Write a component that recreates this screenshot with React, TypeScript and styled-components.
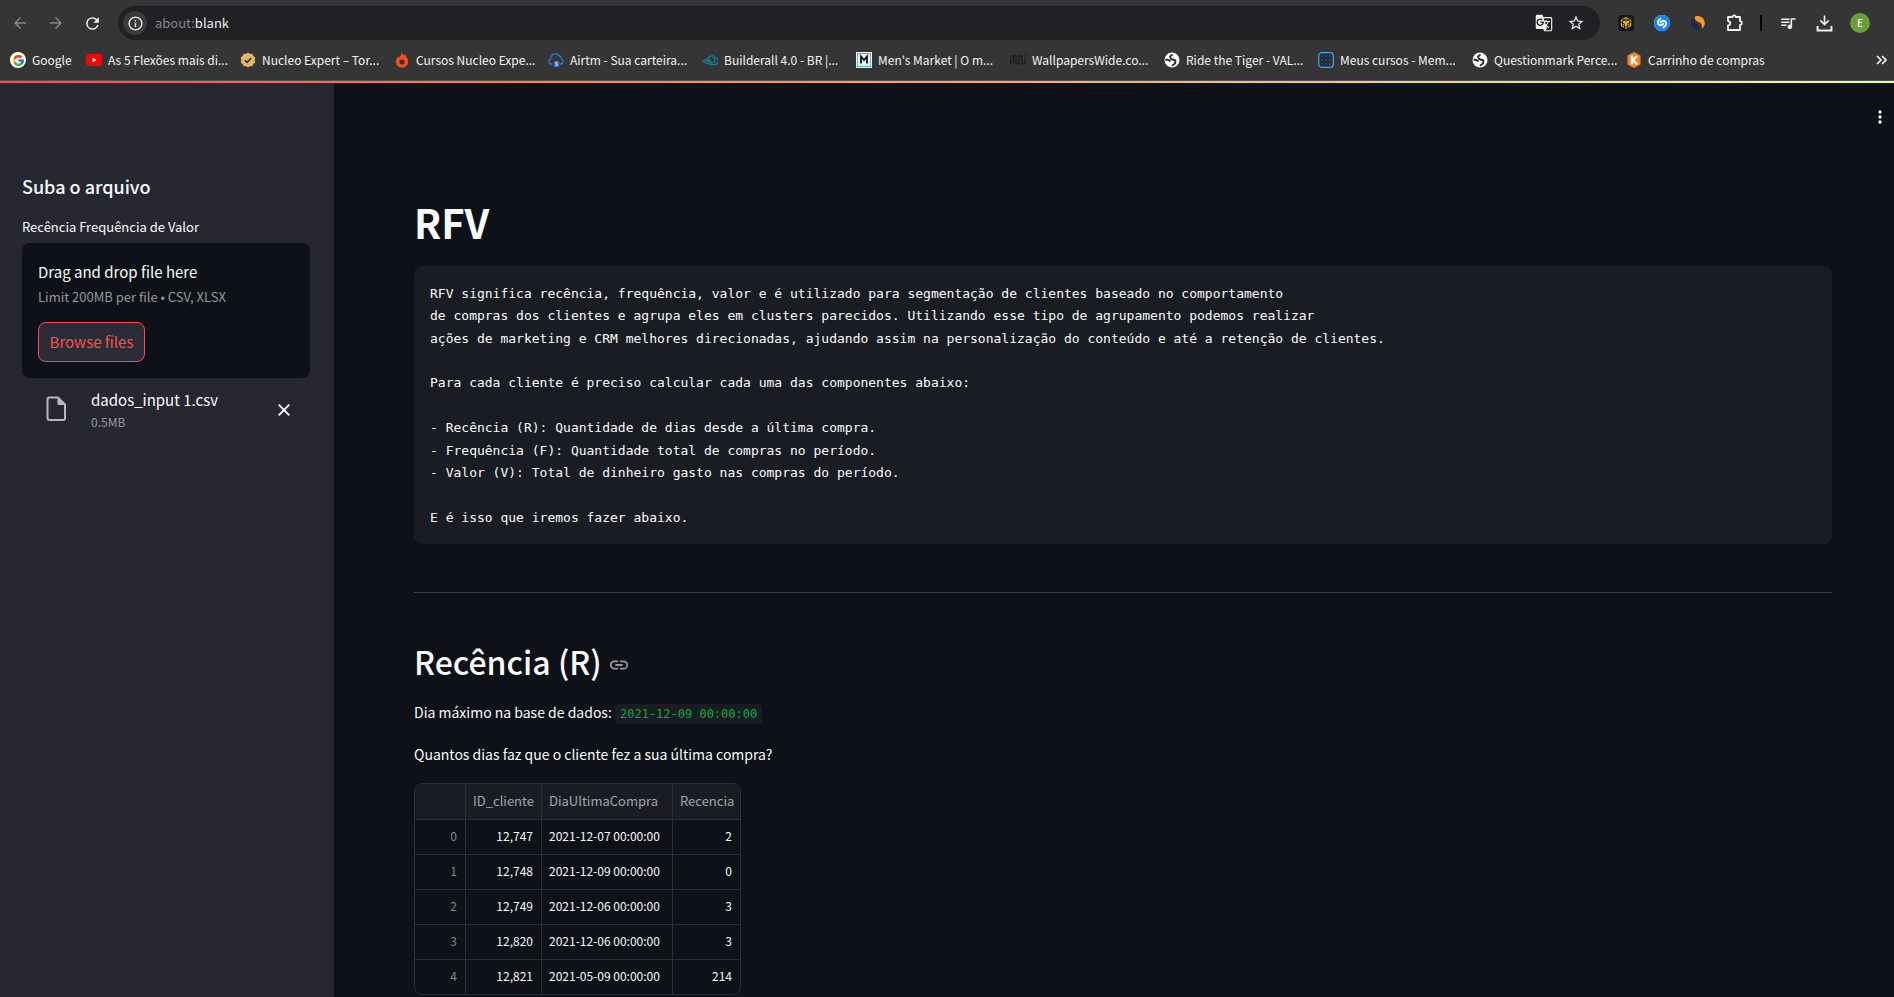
import React from "react";
import styled, { createGlobalStyle, css } from "styled-components";
import { FcGoogle } from "react-icons/fc";
import { SiShazam, SiBnbchain } from "react-icons/si";

const sans = '"Noto Sans CJK JP", "Noto Sans", sans-serif';
const mono = '"DejaVu Sans Mono", "Liberation Mono", monospace';

const GlobalStyle = createGlobalStyle`
  *, *::before, *::after { box-sizing: border-box; }
  body { margin: 0; background: #0e1117; color: #fafafa; font-family: ${sans}; }
  button, input, select { font: inherit; color: inherit; }
  h1, h2, p, pre { margin: 0; }
`;

const Shell = styled.div`
  display: flex;
  flex-direction: column;
  height: 100vh;
  overflow: hidden;
`;

const Chrome = styled.header`
  flex: none;
  background: #353535;
  border-bottom: 1px solid #4a5153;
  font-size: 12px;
`;

const Toolbar = styled.div`
  display: flex;
  align-items: center;
  height: 46px;
  padding: 0 16px 0 8px;
`;

const IconButton = styled.button<{ $size?: number; $dim?: boolean }>`
  display: grid;
  place-items: center;
  flex: none;
  width: ${(p) => p.$size ?? 36}px;
  height: 34px;
  padding: 0;
  border: 0;
  background: none;
  color: ${(p) => (p.$dim ? "#858585" : "#f1f1f1")};
`;

const AddressBar = styled.div`
  display: flex;
  align-items: center;
  flex: 1;
  height: 34px;
  margin: 0 8px 0 14px;
  padding: 0 8px 0 5px;
  border-radius: 17px;
  background: #202124;
`;

const SiteInfo = styled.button`
  display: grid;
  place-items: center;
  width: 24px;
  height: 24px;
  padding: 0;
  border: 0;
  border-radius: 50%;
  background: #3a3a3b;
  color: #e8e8e8;
`;

const Url = styled.span`
  flex: 1;
  margin-left: 8px;
  font-size: 13px;
  line-height: 20px;
  color: #ededed;
`;

const Scheme = styled.span`
  color: #85868a;
`;

const Separator = styled.span`
  width: 2px;
  height: 16px;
  margin: 0 8px;
  background: #050505;
`;

const Avatar = styled.span`
  display: grid;
  place-items: center;
  width: 20px;
  height: 20px;
  border-radius: 50%;
  background: #689f38;
  color: #fff;
  font-size: 10px;
  line-height: 20px;
  font-weight: 500;
`;

const Bookmarks = styled.nav`
  display: flex;
  align-items: center;
  height: 34px;
  padding: 0 7px 6px 10px;
`;

const Bookmark = styled.a<{ $auto?: boolean }>`
  display: flex;
  align-items: center;
  gap: 6px;
  flex: none;
  width: ${(p) => (p.$auto ? "76px" : "154px")};
  color: #f3f3f3;
  line-height: 16px;
  text-decoration: none;
  white-space: nowrap;

  svg { flex: none; }
`;

const More = styled.button`
  display: grid;
  place-items: center;
  margin-left: auto;
  padding: 0;
  border: 0;
  background: none;
  color: #f1f1f1;
`;

const Decoration = styled.div`
  flex: none;
  height: 2px;
  background: linear-gradient(90deg, #ff4b4b, #fffd80);
`;

const Page = styled.div`
  display: flex;
  flex: 1;
  min-height: 0;
`;

const Sidebar = styled.aside`
  flex: none;
  width: 334px;
  padding: 89px 24px 0 22px;
  background: #262730;
`;

const SidebarTitle = styled.h2`
  font-size: 18px;
  line-height: 28px;
  font-weight: 500;
`;

const UploadLabel = styled.label`
  display: block;
  margin-top: 15px;
  margin-bottom: 4px;
  font-size: 13px;
  line-height: 24px;
`;

const Dropzone = styled.section`
  height: 135px;
  padding: 16px;
  border-radius: 8px;
  background: #0e1117;
`;

const DropTitle = styled.p`
  font-size: 15px;
  line-height: 26px;
`;

const Hint = styled.small`
  display: block;
  font-size: 13px;
  line-height: 24px;
  color: #96979b;
`;

const BrowseButton = styled.button`
  width: 107px;
  height: 40px;
  margin-top: 13px;
  padding: 0;
  border: 1px solid #ff4b4b;
  border-radius: 8px;
  background: #2b2c36;
  color: #ff4b4b;
  font-size: 15px;
  line-height: 36px;
`;

const HiddenInput = styled.input`
  display: none;
`;

const FileRow = styled.div`
  display: flex;
  align-items: center;
  padding: 10px 16px 0 20px;
`;

const FileText = styled.div`
  flex: 1;
  margin-left: 21px;
`;

const FileName = styled.p`
  font-size: 15px;
  line-height: 24px;
`;

const FileSize = styled(Hint)`
  line-height: 20px;
  font-size: 12px;
`;

const RemoveButton = styled.button`
  display: grid;
  place-items: center;
  width: 20px;
  height: 20px;
  padding: 0;
  border: 0;
  background: none;
`;

const Main = styled.main`
  position: relative;
  flex: 1;
  min-width: 0;
  padding: 107px 62px 0 80px;
`;

const MenuButton = styled.button`
  position: absolute;
  top: 22px;
  right: 2px;
  display: grid;
  place-items: center;
  width: 24px;
  height: 24px;
  padding: 0;
  border: 0;
  background: none;
`;

const Title = styled.h1`
  font-size: 40px;
  line-height: 64px;
  font-weight: 700;
`;

const CodeBlock = styled.pre`
  margin-top: 12px;
  padding: 17px 16px 15px;
  border-radius: 8px;
  background: #1a1c24;
  font-family: ${mono};
  font-size: 13px;
  line-height: 1.72;
`;

const Rule = styled.hr`
  height: 1px;
  margin: 48px 0 38px;
  border: 0;
  background: #3b3d45;
`;

const SectionTitle = styled.h2`
  display: flex;
  align-items: center;
  gap: 6px;
  font-size: 32px;
  line-height: 60px;
  font-weight: 500;

  a { display: grid; padding-top: 8px; color: #97989c; }
`;

const Paragraph = styled.p<{ $gap?: number }>`
  margin-top: ${(p) => p.$gap ?? 16}px;
  font-size: 14px;
  line-height: 26px;
`;

const InlineCode = styled.code`
  padding: 3px 5px;
  border-radius: 4px;
  background: #1a1c24;
  color: #09ab3b;
  font-family: ${mono};
  font-size: 12px;
  line-height: 16px;
`;

const DataTable = styled.table`
  margin-top: 16px;
  border: 1px solid #2c2e36;
  border-radius: 8px;
  border-spacing: 0;
  overflow: hidden;
  table-layout: fixed;
  width: 327px;
  font-size: 12px;
  line-height: 18px;
`;

const cell = css`
  height: 35px;
  padding: 0 8px 2px 7px;
  border-left: 1px solid #2c2e36;
  border-top: 1px solid #2c2e36;
  font-weight: 400;
  white-space: nowrap;

  &:first-child { border-left: 0; }
`;

const HeadCell = styled.th<{ $width: number; $right?: boolean }>`
  ${cell}
  width: ${(p) => p.$width}px;
  padding-bottom: 0;
  border-top: 0;
  background: #1a1c24;
  color: #a3a4aa;
  font-size: 13px;
  text-align: ${(p) => (p.$right ? "right" : "left")};
`;

const IndexCell = styled.th`
  ${cell}
  color: #85868b;
  text-align: right;
`;

const Cell = styled.td<{ $left?: boolean }>`
  ${cell}
  text-align: ${(p) => (p.$left ? "left" : "right")};
`;

const Icon16 = ({ children }: { children: React.ReactNode }) => (
  <svg width="16" height="16" viewBox="0 0 16 16" fill="none" aria-hidden="true">{children}</svg>
);

const Material = ({ d, size = 20 }: { d: string; size?: number }) => (
  <svg width={size} height={size} viewBox="0 0 24 24" fill="currentColor" aria-hidden="true"><path d={d} /></svg>
);

const Badge = styled.span<{ $bg: string; $radius: string }>`
  display: grid;
  place-items: center;
  flex: none;
  width: 16px;
  height: 16px;
  border-radius: ${(p) => p.$radius};
  background: ${(p) => p.$bg};
`;

const GoogleIcon = () => (
  <Badge $bg="#fff" $radius="50%"><FcGoogle size={13} /></Badge>
);

const YoutubeIcon = () => (
  <Icon16>
    <rect y="2" width="16" height="12" rx="3" fill="#f00" />
    <path d="M6.500 5.600v4.800L10.600 8z" fill="#fff" />
  </Icon16>
);

const SealIcon = () => (
  <Icon16>
    <path d="M8 .5l2 1.400 2.400-.2.9 2.300 2 1.400L14.700 8l.6 2.500-2 1.400-.9 2.400-2.400-.2L8 15.500l-2-1.400-2.400.2-.9-2.400-2-1.400L1.300 8 .7 5.400l2-1.400.9-2.300 2.400.2z" fill="#e8b765" />
    <path d="M4.800 8.200l2.300 2.200 4-4.300" stroke="#2e2618" strokeWidth="1.500" />
  </Icon16>
);

const FlameIcon = () => (
  <Icon16>
    <path d="M7.800 0c.6 2 1.400 2.600 2 3.200l.5-1c2 2 3.900 4.600 3.900 7.400a6.100 6.100 0 0 1-12.300 0c0-2 .9-3.900 2.400-5.200l.6 1.400C6.600 4.200 7.600 2.500 7.800 0z" fill="#f04e23" />
    <circle cx="8" cy="10" r="2.500" fill="#35302e" />
  </Icon16>
);

const CloudIcon = () => (
  <Icon16>
    <path d="M4.500 12H3.300a2.700 2.700 0 0 1-.4-5.300 4.300 4.300 0 0 1 4-4.900c1.500-.2 3 .5 3.800 1.700a3.700 3.700 0 0 1 2.700 3.300A2.700 2.700 0 0 1 12.900 12h-1.400" stroke="#1a7fe0" strokeWidth="1.300" />
    <rect x="6" y="9" width="5" height="6" fill="#1a82f0" />
    <path d="M9.500 10.500H7.800V12h1.500v1.300H7.500" stroke="#cfe6ff" strokeWidth=".8" />
  </Icon16>
);

const WaveCloudIcon = () => (
  <Icon16>
    <path d="M6 6.500a4.700 4.700 0 0 1 8.300-.5 3.500 3.500 0 0 1-1.800 6.600H8M10.500 5.500a2.800 2.800 0 0 1 1.200 5H8.500" stroke="#1b7f9e" strokeWidth="1.200" />
    <path d="M0 9.500l6-3 4 5M1.500 11l4.500-2.500 2.500 3.500M3.500 12l2-1 1.500 1.500" stroke="#1b7f9e" strokeWidth="1.200" />
  </Icon16>
);

const MarketIcon = () => (
  <Icon16>
    <rect width="16" height="16" fill="#fff" />
    <rect x="1.500" y="1.500" width="13" height="13" fill="#e8f6fa" stroke="#56b4cf" />
    <path d="M5 11.500v-7l3 3.500 3-3.500v7" stroke="#111" strokeWidth="1.800" />
  </Icon16>
);

const WideIcon = () => (
  <Icon16>
    <path d="M.8 6v5.500M.8 3v1.500M3.500 11.500V4H6v7.500h3V4h3v7.500h3V6.500M15 3v1.500M3.500 4H2" stroke="#1b1b1b" strokeWidth="1.400" />
  </Icon16>
);

const GlobeIcon = () => (
  <Icon16>
    <circle cx="8" cy="8" r="7.500" fill="#fff" />
    <path d="M8.500 2.500L6 4.500 7 7l4.500 1.500-.5 3-3 2.200M1.500 7.500l3 .5 2 1.500" stroke="#303030" strokeWidth="1.900" strokeLinejoin="round" />
  </Icon16>
);

const GridIcon = () => (
  <Icon16>
    <rect x=".7" y=".7" width="14.600" height="14.600" rx="3" fill="#272c31" stroke="#35aee2" strokeWidth="1.200" />
    <g fill="#263f85">
      {[3, 7, 11].map((y) => [3, 7, 11].map((x) => <rect key={`${x}-${y}`} x={x} y={y} width="2" height="2" />))}
    </g>
  </Icon16>
);

const KIcon = () => (
  <Icon16>
    <path d="M8 0l6.500 3.500v9L8 16l-6.500-3.500v-9z" fill="#f58220" />
    <path d="M5.800 3.500v9M11 4L7 8l4.200 4.500" stroke="#fff" strokeWidth="2.200" />
  </Icon16>
);

const bookmarks = [
  { label: "Google", icon: <GoogleIcon />, auto: true },
  { label: "As 5 Flexões mais di...", icon: <YoutubeIcon /> },
  { label: "Nucleo Expert – Tor...", icon: <SealIcon /> },
  { label: "Cursos Nucleo Expe...", icon: <FlameIcon /> },
  { label: "Airtm - Sua carteira...", icon: <CloudIcon /> },
  { label: "Builderall 4.0 - BR |...", icon: <WaveCloudIcon /> },
  { label: "Men's Market | O m...", icon: <MarketIcon /> },
  { label: "WallpapersWide.co...", icon: <WideIcon /> },
  { label: "Ride the Tiger - VAL...", icon: <GlobeIcon /> },
  { label: "Meus cursos - Mem...", icon: <GridIcon /> },
  { label: "Questionmark Perce...", icon: <GlobeIcon /> },
  { label: "Carrinho de compras", icon: <KIcon /> },
];

const rows = [
  { index: 0, id: "12,747", lastPurchase: "2021-12-07 00:00:00", recency: 2 },
  { index: 1, id: "12,748", lastPurchase: "2021-12-09 00:00:00", recency: 0 },
  { index: 2, id: "12,749", lastPurchase: "2021-12-06 00:00:00", recency: 3 },
  { index: 3, id: "12,820", lastPurchase: "2021-12-06 00:00:00", recency: 3 },
  { index: 4, id: "12,821", lastPurchase: "2021-05-09 00:00:00", recency: 214 },
];

const description = `RFV significa recência, frequência, valor e é utilizado para segmentação de clientes baseado no comportamento
de compras dos clientes e agrupa eles em clusters parecidos. Utilizando esse tipo de agrupamento podemos realizar
ações de marketing e CRM melhores direcionadas, ajudando assim na personalização do conteúdo e até a retenção de clientes.

Para cada cliente é preciso calcular cada uma das componentes abaixo:

- Recência (R): Quantidade de dias desde a última compra.
- Frequência (F): Quantidade total de compras no período.
- Valor (V): Total de dinheiro gasto nas compras do período.

E é isso que iremos fazer abaixo.`;

const paths = {
  back: "M20 11H7.830l5.590-5.590L12 4l-8 8 8 8 1.410-1.410L7.830 13H20v-2z",
  forward: "M12 4l-1.410 1.410L16.170 11H4v2h12.170l-5.580 5.590L12 20l8-8z",
  reload: "M17.650 6.350A7.958 7.958 0 0 0 12 4a8 8 0 1 0 7.730 10h-2.080A6 6 0 1 1 12 6c1.660 0 3.140.69 4.220 1.780L13 11h7V4l-2.350 2.350z",
  info: "M11 7h2v2h-2zm0 4h2v6h-2zm1-9a10 10 0 1 0 0 20 10 10 0 0 0 0-20zm0 18a8 8 0 1 1 0-16 8 8 0 0 1 0 16z",
  translate: "M21 4H11l-1-3H3c-1.100 0-2 .9-2 2v15c0 1.100.9 2 2 2h8l1 3h9c1.100 0 2-.9 2-2V6c0-1.100-.9-2-2-2zM7 16c-2.760 0-5-2.240-5-5s2.240-5 5-5c1.350 0 2.480.5 3.350 1.300L9.030 8.570c-.38-.36-1.040-.78-2.030-.78-1.740 0-3.150 1.440-3.150 3.210S5.260 14.210 7 14.210c2.010 0 2.840-1.440 2.920-2.410H7v-1.710h4.680c.07.31.12.61.12 1.020C11.800 13.970 9.890 16 7 16zm6.170-5.420h3.700c-.43 1.250-1.110 2.430-2.050 3.470-.31-.35-.6-.72-.86-1.100l-.79-2.370zm8.330 9.920c0 .55-.45 1-1 1H14l2-2.500-1.040-3.100 3.100 3.100.92-.92-3.300-3.250.02-.02c1.130-1.250 1.930-2.690 2.400-4.220H20v-1.300h-4.530V8h-1.290v1.290h-1.440L11.460 5.500h9.040c.55 0 1 .45 1 1v14z",
  star: "M22 9.240l-7.190-.62L12 2 9.190 8.630 2 9.240l5.460 4.730L5.820 21 12 17.270 18.180 21l-1.630-7.030L22 9.240zM12 15.400l-3.760 2.270 1-4.280-3.320-2.880 4.380-.38L12 6.100l1.710 4.040 4.380.38-3.320 2.880 1 4.280L12 15.400z",
  queue: "M3 10h11v2H3zm0-4h11v2H3zm0 8h7v2H3zM15.500 5.500V14.200A3 3 0 1 0 17.500 17V7.500H22v-2z",
  download: "M11 2h2v9l3.600-3.600L18 8.800l-6 6-6-6 1.400-1.400L11 11zM2 15h2.500v4.500h15V15H22v7H2z",
  more: "M12 8a2 2 0 1 0 0-4 2 2 0 0 0 0 4zm0 2a2 2 0 1 0 0 4 2 2 0 0 0 0-4zm0 6a2 2 0 1 0 0 4 2 2 0 0 0 0-4z",
  link: "M3.900 12c0-1.710 1.390-3.100 3.100-3.100h4V7H7a5 5 0 0 0 0 10h4v-1.900H7c-1.710 0-3.100-1.390-3.100-3.100zM8 13h8v-2H8v2zm9-6h-4v1.900h4a3.100 3.100 0 0 1 0 6.200h-4V17h4a5 5 0 0 0 0-10z",
};

export default function App() {
  return (
    <Shell>
      <GlobalStyle />
      <Chrome>
        <Toolbar>
          <IconButton $dim $size={24} aria-label="Voltar"><Material d={paths.back} size={18} /></IconButton>
          <IconButton $dim $size={48} aria-label="Avançar"><Material d={paths.forward} size={18} /></IconButton>
          <IconButton $size={24} aria-label="Recarregar"><Material d={paths.reload} size={19} /></IconButton>
          <AddressBar>
            <SiteInfo aria-label="Informações do site"><Material d={paths.info} size={17} /></SiteInfo>
            <Url><Scheme>about:</Scheme>blank</Url>
            <IconButton $size={32} aria-label="Traduzir"><Material d={paths.translate} size={18} /></IconButton>
            <IconButton $size={32} aria-label="Favoritar"><Material d={paths.star} size={18} /></IconButton>
          </AddressBar>
          <IconButton aria-label="Carteira">
            <Badge $bg="#14181f" $radius="3px"><SiBnbchain size={12} color="#f0b90b" /></Badge>
          </IconButton>
          <IconButton aria-label="Shazam">
            <Badge $bg="#fff" $radius="50%"><SiShazam size={16} color="#0a84ff" /></Badge>
          </IconButton>
          <IconButton aria-label="Similarweb">
            <Icon16>
              <path d="M3 2.500C.5 5.500.7 10.200 3.300 12.700c2 2 5.200 2.300 7.200 1.300C9 10.500 4 8.500 3 2.500z" fill="#1b2653" />
              <path d="M5 1.500c4-1.500 9 1 9.700 5.500.4 3-1 5.500-2.700 6.700.6-5-1.500-6-4.500-7.200C5.200 5.500 4.500 3.500 5 1.500z" fill="#ff9a1f" />
            </Icon16>
          </IconButton>
          <IconButton aria-label="Extensões">
            <svg width="18" height="18" viewBox="0 0 18 18" fill="none" stroke="currentColor" strokeWidth="1.800" aria-hidden="true">
              <path d="M3 3h4.500a1.600 1.600 0 0 1 3.200 0H15v4.200a1.800 1.800 0 0 1 0 3.600V16H3v-4.500c3-.5 3-4 0-4.500z" strokeLinejoin="round" />
            </svg>
          </IconButton>
          <Separator />
          <IconButton aria-label="Mídia"><Material d={paths.queue} size={18} /></IconButton>
          <IconButton aria-label="Downloads"><Material d={paths.download} size={19} /></IconButton>
          <IconButton aria-label="Perfil"><Avatar>E</Avatar></IconButton>
        </Toolbar>
        <Bookmarks aria-label="Favoritos">
          {bookmarks.map((b) => (
            <Bookmark key={b.label} href="#" $auto={b.auto}>{b.icon}{b.label}</Bookmark>
          ))}
          <More aria-label="Mais favoritos">
            <svg width="11" height="10" viewBox="0 0 11 10" fill="none" stroke="currentColor" strokeWidth="1.700" aria-hidden="true">
              <path d="M1 1l4 4-4 4M6 1l4 4-4 4" />
            </svg>
          </More>
        </Bookmarks>
      </Chrome>
      <Decoration />
      <Page>
        <Sidebar>
          <SidebarTitle>Suba o arquivo</SidebarTitle>
          <UploadLabel htmlFor="upload">Recência Frequência de Valor</UploadLabel>
          <Dropzone>
            <DropTitle>Drag and drop file here</DropTitle>
            <Hint>Limit 200MB per file • CSV, XLSX</Hint>
            <HiddenInput id="upload" type="file" accept=".csv,.xlsx" />
            <BrowseButton type="button">Browse files</BrowseButton>
          </Dropzone>
          <FileRow>
            <svg width="28" height="28" viewBox="0 0 28 28" fill="none" aria-hidden="true">
              <path d="M7.500 1.500h8.500l7 7v13.500a2 2 0 0 1-2 2H7.500a2 2 0 0 1-2-2v-18.500a2 2 0 0 1 2-2z" stroke="#b4b6cc" strokeWidth="2" />
              <path d="M15.500 2v7H23z" fill="#b4b6cc" />
            </svg>
            <FileText>
              <FileName>dados_input 1.csv</FileName>
              <FileSize>0.5MB</FileSize>
            </FileText>
            <RemoveButton aria-label="Remover arquivo">
              <svg width="12" height="12" viewBox="0 0 12 12" fill="none" stroke="currentColor" strokeWidth="1.800" aria-hidden="true">
                <path d="M.7.7l10.600 10.600M11.300.7L.7 11.300" />
              </svg>
            </RemoveButton>
          </FileRow>
        </Sidebar>
        <Main>
          <MenuButton aria-label="Menu"><Material d={paths.more} size={20} /></MenuButton>
          <Title>RFV</Title>
          <CodeBlock>{description}</CodeBlock>
          <Rule />
          <SectionTitle>
            Recência (R)
            <a href="#recencia-r" aria-label="Link para a seção"><Material d={paths.link} size={22} /></a>
          </SectionTitle>
          <Paragraph $gap={8}>Dia máximo na base de dados: <InlineCode>2021-12-09 00:00:00</InlineCode></Paragraph>
          <Paragraph>Quantos dias faz que o cliente fez a sua última compra?</Paragraph>
          <DataTable>
            <thead>
              <tr>
                <HeadCell $width={50} aria-label="Índice" />
                <HeadCell $width={76} scope="col" $right>ID_cliente</HeadCell>
                <HeadCell $width={131} scope="col">DiaUltimaCompra</HeadCell>
                <HeadCell $width={68} scope="col" $right>Recencia</HeadCell>
              </tr>
            </thead>
            <tbody>
              {rows.map((row) => (
                <tr key={row.index}>
                  <IndexCell scope="row">{row.index}</IndexCell>
                  <Cell>{row.id}</Cell>
                  <Cell $left>{row.lastPurchase}</Cell>
                  <Cell>{row.recency}</Cell>
                </tr>
              ))}
            </tbody>
          </DataTable>
        </Main>
      </Page>
    </Shell>
  );
}
